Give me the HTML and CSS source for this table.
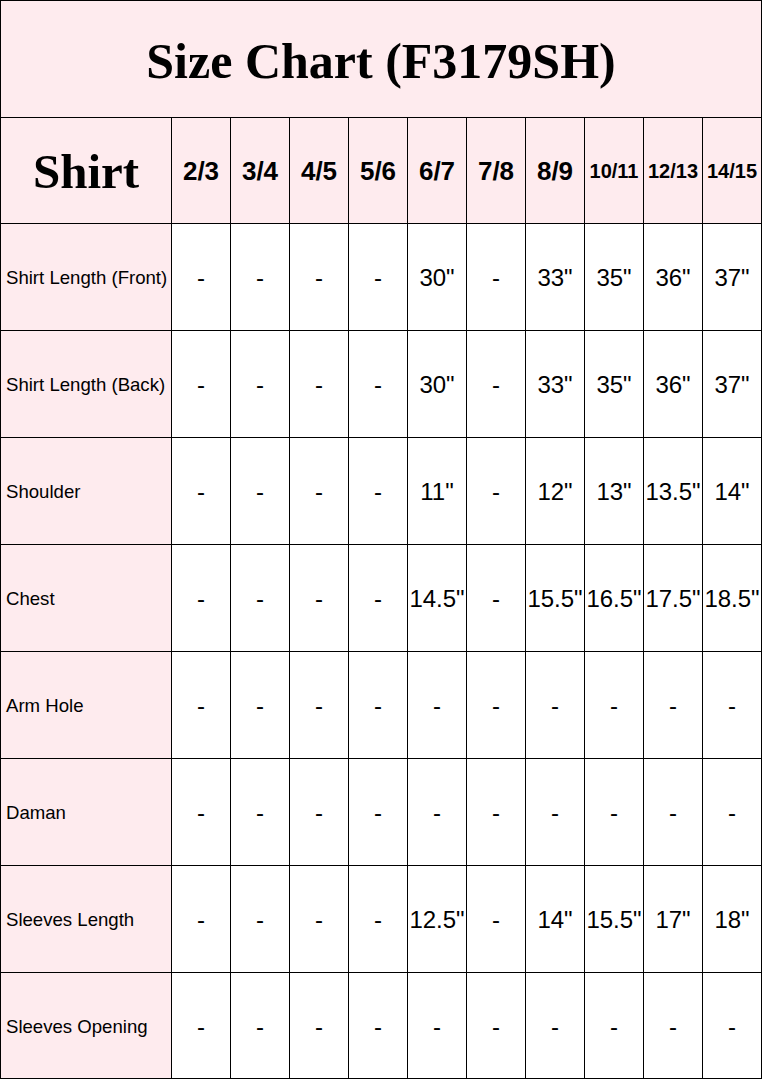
FILE: index.html
```html
<!DOCTYPE html>
<html>
<head>
<meta charset="utf-8">
<title>Size Chart (F3179SH)</title>
<link rel="stylesheet" href="styles.css">
</head>
<body>
<div class="chart">
  <div class="title pink">Size Chart (F3179SH)</div>

  <div class="cell pink corner">Shirt</div>
  <div class="cell pink size">2/3</div>
  <div class="cell pink size">3/4</div>
  <div class="cell pink size">4/5</div>
  <div class="cell pink size">5/6</div>
  <div class="cell pink size">6/7</div>
  <div class="cell pink size">7/8</div>
  <div class="cell pink size">8/9</div>
  <div class="cell pink size small">10/11</div>
  <div class="cell pink size small">12/13</div>
  <div class="cell pink size small">14/15</div>

  <div class="cell pink label">Shirt Length (Front)</div>
  <div class="cell val">-</div><div class="cell val">-</div><div class="cell val">-</div><div class="cell val">-</div>
  <div class="cell val">30"</div><div class="cell val">-</div><div class="cell val">33"</div><div class="cell val">35"</div><div class="cell val">36"</div><div class="cell val">37"</div>

  <div class="cell pink label">Shirt Length (Back)</div>
  <div class="cell val">-</div><div class="cell val">-</div><div class="cell val">-</div><div class="cell val">-</div>
  <div class="cell val">30"</div><div class="cell val">-</div><div class="cell val">33"</div><div class="cell val">35"</div><div class="cell val">36"</div><div class="cell val">37"</div>

  <div class="cell pink label">Shoulder</div>
  <div class="cell val">-</div><div class="cell val">-</div><div class="cell val">-</div><div class="cell val">-</div>
  <div class="cell val">11"</div><div class="cell val">-</div><div class="cell val">12"</div><div class="cell val">13"</div><div class="cell val">13.5"</div><div class="cell val">14"</div>

  <div class="cell pink label">Chest</div>
  <div class="cell val">-</div><div class="cell val">-</div><div class="cell val">-</div><div class="cell val">-</div>
  <div class="cell val">14.5"</div><div class="cell val">-</div><div class="cell val">15.5"</div><div class="cell val">16.5"</div><div class="cell val">17.5"</div><div class="cell val">18.5"</div>

  <div class="cell pink label">Arm Hole</div>
  <div class="cell val">-</div><div class="cell val">-</div><div class="cell val">-</div><div class="cell val">-</div>
  <div class="cell val">-</div><div class="cell val">-</div><div class="cell val">-</div><div class="cell val">-</div><div class="cell val">-</div><div class="cell val">-</div>

  <div class="cell pink label">Daman</div>
  <div class="cell val">-</div><div class="cell val">-</div><div class="cell val">-</div><div class="cell val">-</div>
  <div class="cell val">-</div><div class="cell val">-</div><div class="cell val">-</div><div class="cell val">-</div><div class="cell val">-</div><div class="cell val">-</div>

  <div class="cell pink label">Sleeves Length</div>
  <div class="cell val">-</div><div class="cell val">-</div><div class="cell val">-</div><div class="cell val">-</div>
  <div class="cell val">12.5"</div><div class="cell val">-</div><div class="cell val">14"</div><div class="cell val">15.5"</div><div class="cell val">17"</div><div class="cell val">18"</div>

  <div class="cell pink label">Sleeves Opening</div>
  <div class="cell val">-</div><div class="cell val">-</div><div class="cell val">-</div><div class="cell val">-</div>
  <div class="cell val">-</div><div class="cell val">-</div><div class="cell val">-</div><div class="cell val">-</div><div class="cell val">-</div><div class="cell val">-</div>
</div>
</body>
</html>
```
FILE: styles.css
```css
html, body {
  margin: 0;
  padding: 0;
  background: #ffffff;
}

.chart {
  width: 760px;
  padding: 1px;
  background: #000000;
  display: grid;
  grid-template-columns: 170px repeat(10, 58px);
  grid-template-rows: 116px 105px repeat(7, 106px) 105px;
  gap: 1px;
  font-family: "Liberation Sans", Arial, sans-serif;
  color: #000;
}

.pink {
  background: #feebee;
}

.title {
  grid-column: 1 / -1;
  display: flex;
  align-items: center;
  justify-content: center;
  font-family: "Liberation Serif", "Times New Roman", serif;
  font-weight: bold;
  font-size: 50px;
  padding-top: 3px;
}

.cell {
  display: flex;
  align-items: center;
  justify-content: center;
  white-space: nowrap;
  overflow: visible;
}

.corner {
  font-family: "Liberation Serif", "Times New Roman", serif;
  font-weight: bold;
  font-size: 49px;
  padding-top: 2px;
}

.size {
  font-weight: bold;
  font-size: 26px;
  padding-top: 1px;
}

.size.small {
  font-size: 20px;
}

.label {
  justify-content: flex-start;
  padding-left: 5px;
  padding-top: 2px;
  font-size: 18.6px;
}

.val {
  background: #ffffff;
  font-size: 24px;
  padding-top: 2px;
}
```
